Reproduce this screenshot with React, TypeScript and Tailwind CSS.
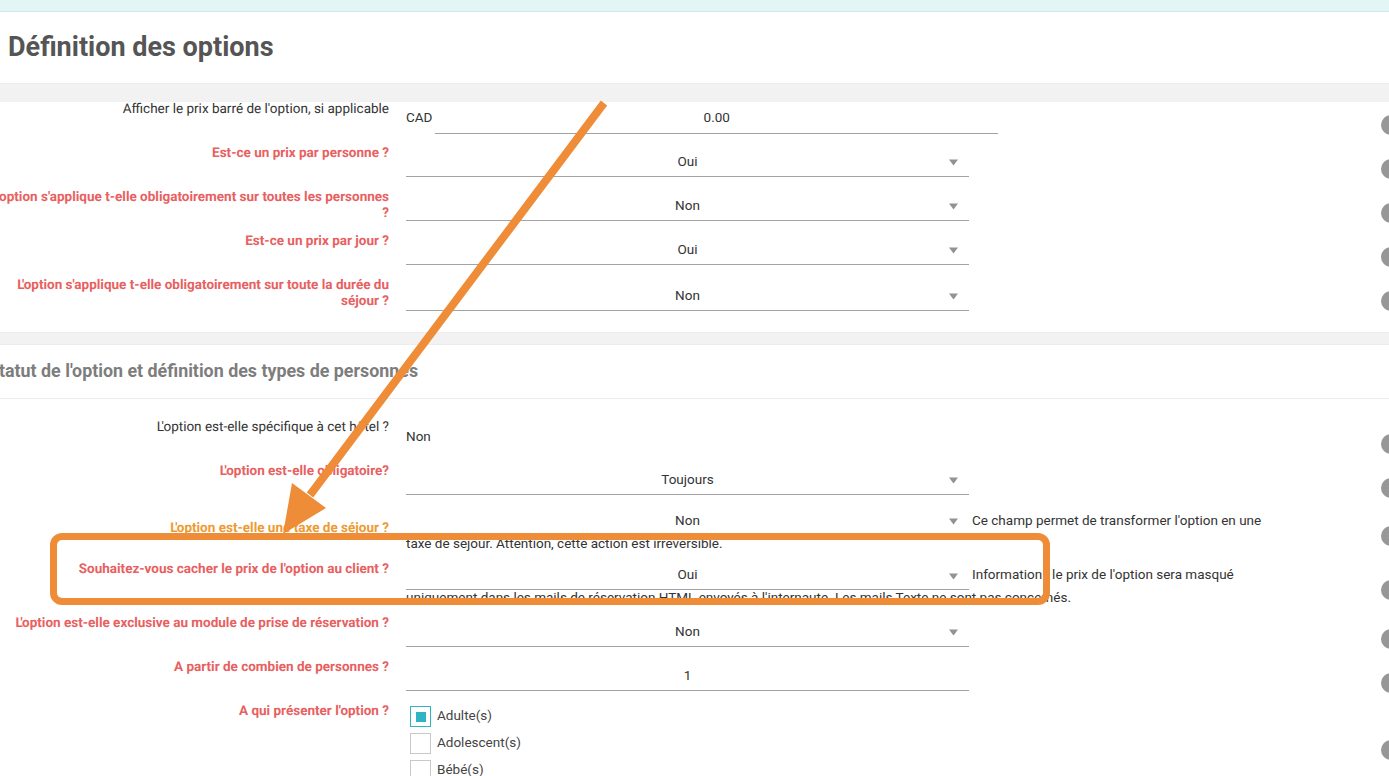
import React from 'react';

function Caret({ top }: { top: number }) {
  return (
    <svg className="absolute right-[11px]" style={{ top }} width="9" height="7" viewBox="0 0 9 7">
      <path d="M0 0.5 H9 L4.5 6.5 Z" fill="#929292" />
    </svg>
  );
}

function Select({
  value,
  height = 31,
  pad = 7,
  caret = 13
}: {
  value: string;
  height?: number;
  pad?: number;
  caret?: number | null;
}) {
  return (
    <div
      className="relative w-[563px] shrink-0 border-b border-[#a3a3a3] text-center leading-[16px]"
      style={{ height, paddingTop: pad }}
    >
      {value}
      {caret !== null && <Caret top={caret} />}
    </div>
  );
}

function Row({
  label,
  kind = 'req',
  height,
  dot,
  lift = -1,
  children
}: {
  label: string;
  kind?: 'req' | 'plain' | 'warn';
  height: number;
  dot?: number;
  lift?: number;
  children?: React.ReactNode;
}) {
  const color =
    kind === 'req'
      ? 'text-[#e8605f] font-bold'
      : kind === 'warn'
        ? 'text-[#ee9a32] font-bold'
        : 'text-[#333333]';
  // the L' pair sits tighter in the original
  const tight = label.startsWith("L'");
  return (
    <div className="relative flex" style={{ height }}>
      <div
        className={`-ml-[14px] w-[403px] shrink-0 text-right leading-[16px] [text-rendering:geometricPrecision] ${color}`}
        style={{ marginTop: -lift }}
      >
        {tight && <span className="tracking-[-2.5px]">L</span>}
        {tight ? label.slice(1) : label}
      </div>
      <div className="ml-[17px] w-[860px] shrink-0 text-[#333333]">{children}</div>
      {dot !== undefined && (
        <span className="absolute left-[1381px] w-5 h-5 rounded-full bg-[#979797]" style={{ top: dot }}></span>
      )}
    </div>
  );
}

function Check({ label, checked = false }: { label: string; checked?: boolean }) {
  return (
    <div className="flex items-center h-[27px]">
      <span
        className={`ml-[4px] w-[21px] h-[21px] border flex items-center justify-center ${
          checked ? 'border-[#2fb4c4]' : 'border-[#c9c9c9]'
        }`}
      >
        {checked && <span className="w-[10px] h-[10px] bg-[#2fb4c4]"></span>}
      </span>
      <span className="ml-[6px] -mt-[3px] text-[#444444]">{label}</span>
    </div>
  );
}

export default function App() {
  return (
    <div className="relative w-[1389px] h-[776px] overflow-hidden bg-white text-[13.5px] font-['Roboto',sans-serif]">
      <div className="h-3 bg-[#e3f6f6] border-b border-[#cfe9ea]"></div>

      {/* Title */}
      <div className="h-[71px] pl-2 pt-[19px]">
        <h1 className="text-[27px] leading-[32px] font-bold text-[#555555]">Définition des options</h1>
      </div>

      <div className="h-[19px] bg-[#f2f2f2] border-t border-[#ececec]"></div>

      {/* Prix */}
      <div className="h-[230px]">
        <Row label="Afficher le prix barré de l'option, si applicable" kind="plain" height={44} dot={13} lift={1}>
          <div className="flex w-[592px]">
            <span className="pt-[7px] leading-[16px] mr-[3px]">CAD</span>
            <div className="flex-1 h-[32px] border-b border-[#a3a3a3] pt-[7px] text-center leading-[16px]">0.00</div>
          </div>
        </Row>
        <Row label="Est-ce un prix par personne ?" height={44} dot={13} lift={1}>
          <Select value="Oui" />
        </Row>
        <Row label="L'option s'applique t-elle obligatoirement sur toutes les personnes ?" height={44} dot={13} lift={1}>
          <Select value="Non" />
        </Row>
        <Row label="Est-ce un prix par jour ?" height={44} dot={13} lift={1}>
          <Select value="Oui" />
        </Row>
        <Row label="L'option s'applique t-elle obligatoirement sur toute la durée du séjour ?" height={54} dot={13} lift={1}>
          <Select value="Non" height={33} pad={9} caret={15} />
        </Row>
      </div>

      <div className="h-[13px] bg-[#f2f2f2] border-y border-[#ececec]"></div>

      {/* Statut */}
      <div className="h-[54px] border-b border-[#ececec] pt-4">
        <h2 className="-ml-[12px] text-[17.85px] leading-[20px] font-bold text-[#7d7d7d] whitespace-nowrap">
          Statut de l'option et définition des types de personnes
        </h2>
      </div>

      <div className="pt-[19px]">
        <Row label="L'option est-elle spécifique à cet hôtel ?" kind="plain" height={44} dot={16}>
          <div className="pt-[10px] leading-[16px]">Non</div>
        </Row>
        <Row label="L'option est-elle obligatoire?" height={57} dot={16}>
          <Select value="Toujours" height={33} pad={9} caret={15} />
        </Row>
        <Row label="L'option est-elle une taxe de séjour ?" kind="warn" height={41} dot={7}>
          <div className="-mt-[7px]">
            <div className="flex">
              <Select value="Non" height={24} pad={0} caret={6} />
              <div className="ml-[3px] leading-[16px] whitespace-nowrap">
                Ce champ permet de transformer l'option en une
              </div>
            </div>
            <div className="-mt-px leading-[16px]">taxe de séjour. Attention, cette action est irréversible.</div>
          </div>
        </Row>
        <Row label="Souhaitez-vous cacher le prix de l'option au client ?" height={54} dot={20}>
          <div className="mt-[6px]">
            <div className="flex">
              <Select value="Oui" height={24} pad={0} caret={7} />
              <div className="ml-[3px] leading-[16px] whitespace-nowrap">
                Information : le prix de l'option sera masqué
              </div>
            </div>
            <div className="-mt-px leading-[16px]">
              uniquement dans les mails de réservation HTML envoyés à l'internaute. Les mails Texte ne sont pas
              concernés.
            </div>
          </div>
        </Row>
        <Row label="L'option est-elle exclusive au module de prise de réservation ?" height={44} dot={15}>
          <Select value="Non" height={33} pad={9} caret={15} />
        </Row>
        <Row label="A partir de combien de personnes ?" height={44} dot={15}>
          <Select value="1" height={33} pad={9} caret={null} />
        </Row>
        <Row label="A qui présenter l'option ?" height={74} dot={38}>
          <div className="pt-[1px]">
            <Check label="Adulte(s)" checked />
            <Check label="Adolescent(s)" />
            <Check label="Bébé(s)" />
          </div>
        </Row>
      </div>

      {/* Annotation drawn over the page */}
      <svg className="absolute left-0 top-0 pointer-events-none" width="1389" height="776" viewBox="0 0 1389 776">
        <line x1="604" y1="103" x2="310" y2="495" stroke="#ee8c37" strokeWidth="8" />
        <polygon points="292,483 326,508 283,534" fill="#ee8c37" />
      </svg>
      <div className="absolute left-[50px] top-[533px] w-[1000px] h-[72px] border-[7px] border-[#ee8c37] rounded-[12px]"></div>
    </div>
  );
}
